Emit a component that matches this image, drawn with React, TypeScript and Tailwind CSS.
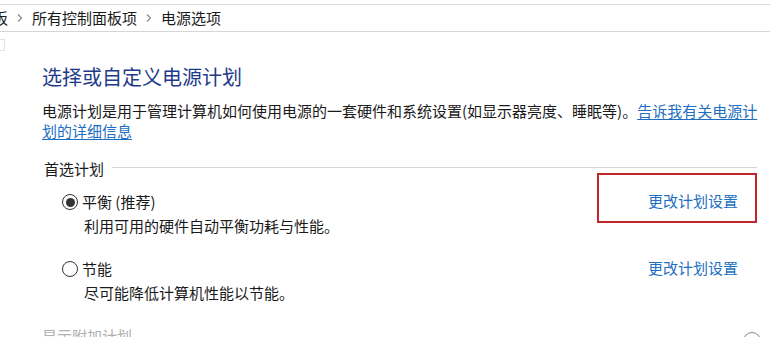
import React from 'react';

const font = { fontFamily: '"Noto Sans CJK SC", "Noto Sans", sans-serif' };

function Chevron() {
  return (
    <svg width="8" height="10" viewBox="0 0 8 10" className="mx-[8px] shrink-0">
      <path d="M2 1.5 L5.5 5 L2 8.5" fill="none" stroke="#8a8a8a" strokeWidth="1.2" />
    </svg>
  );
}

function Radio({ checked }: { checked?: boolean }) {
  return (
    <span className="w-[16px] h-[16px] rounded-full border border-[#333] bg-white flex items-center justify-center shrink-0">
      {checked && <span className="w-[9px] h-[9px] rounded-full bg-[#333]" />}
    </span>
  );
}

function Plan({
  name,
  desc,
  checked,
}: {
  name: string;
  desc: string;
  checked?: boolean;
}) {
  return (
    <div className="flex justify-between pl-[20px] pr-[19px]">
      <div>
        <div className="flex items-center gap-[4px] h-[20px] text-[15px] leading-[20px] text-[#1a1a1a]">
          <Radio checked={checked} />
          <span>{name}</span>
        </div>
        <div className="pl-[22px] mt-[4px] text-[15px] leading-[20px] text-[#1a1a1a]">{desc}</div>
      </div>
      <a className="text-[15px] leading-[20px] h-[20px] text-[#1e6fbf] -mt-[1px] cursor-pointer">更改计划设置</a>
    </div>
  );
}

export default function App() {
  return (
    <div className="relative w-[770px] h-[337px] overflow-hidden bg-white" style={font}>
      <div className="h-[5px] border-b border-[#dadada]" />
      <div className="h-[27px] flex items-center border-b border-[#d6d6d6] text-[15px] text-[#1a1a1a] whitespace-nowrap">
        <span className="-ml-[7px]">板</span>
        <Chevron />
        <span>所有控制面板项</span>
        <Chevron />
        <span>电源选项</span>
      </div>
      <div className="flex">
        <div className="w-[6px] pt-[7px]">
          <div className="h-[12px] w-[5px] border border-l-0 border-[#e3e3e3]" />
        </div>
        <div className="flex-1 pl-[36px] pr-[10px]">
          <h1 className="mt-[31px] text-[20px] leading-[28px] text-[#1e3a8a] font-normal">
            选择或自定义电源计划
          </h1>
          <p className="mt-[10px] text-[15px] leading-[20px] text-[#1a1a1a]">
            电源计划是用于管理计算机如何使用电源的一套硬件和系统设置(如显示器亮度、睡眠等)。
            <a className="text-[#1e6fbf] underline underline-offset-2 cursor-pointer">告诉我有关电源计划的详细信息</a>
          </p>
          <div className="mt-[18px] mr-[3px] flex items-center">
            <span className="pl-[2px] text-[15px] leading-[20px] text-[#1a1a1a]">首选计划</span>
            <div className="flex-1 ml-[8px] mb-[3px] border-t border-[#d6d6d6]" />
          </div>
          <div className="mt-[13px] mr-[3px]">
            <Plan checked name="平衡 (推荐)" desc="利用可用的硬件自动平衡功耗与性能。" />
          </div>
          <div className="mt-[23px] mr-[3px]">
            <Plan name="节能" desc="尽可能降低计算机性能以节能。" />
          </div>
          <div className="mt-[23px] text-[15px] leading-[20px] text-[#b0b0b0]">显示附加计划</div>
        </div>
      </div>
      <div className="absolute left-[597px] top-[173px] w-[160px] h-[50px] border-2 border-[#c0272d]" />
      <div className="absolute left-[743px] top-[332px] w-[18px] h-[18px] rounded-full border border-[#8a8a8a]" />
    </div>
  );
}
